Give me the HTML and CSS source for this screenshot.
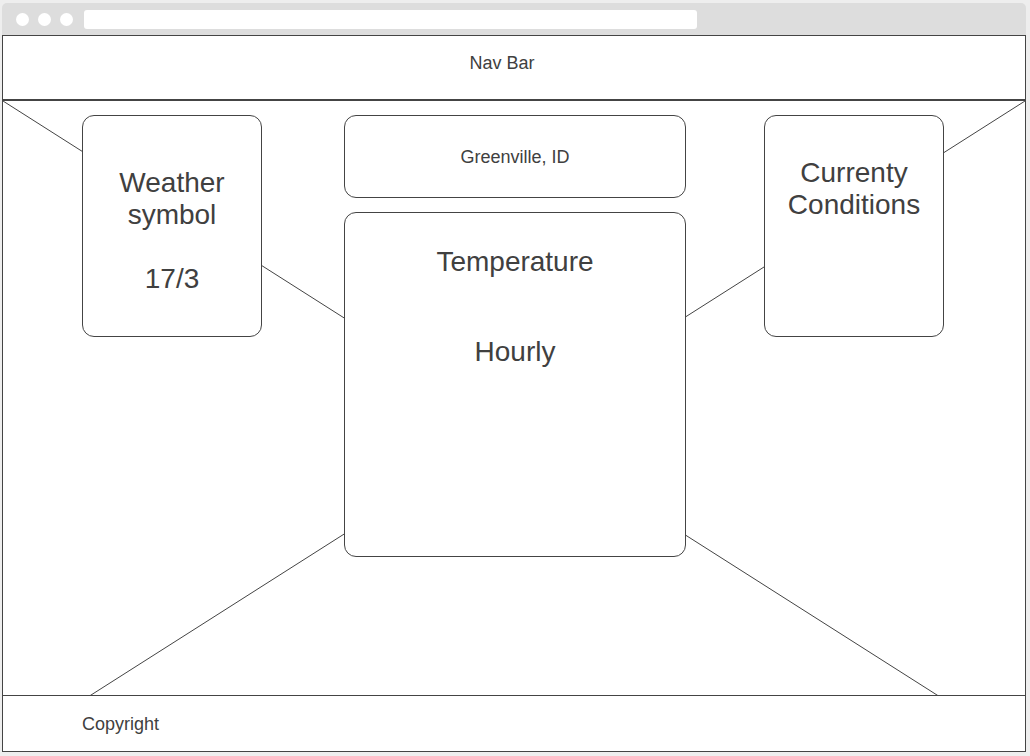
FILE: index.html
```html
<!DOCTYPE html>
<html lang="en">
<head>
  <meta charset="UTF-8" />
  <meta name="viewport" content="width=device-width, initial-scale=1.0"/>
  <title>Weather | Wireframe</title>
  <link rel="stylesheet" href="styles.css">
</head>
<body>

  <div class="window">
    <div class="chrome">
      <span class="dot"></span>
      <span class="dot"></span>
      <span class="dot"></span>
      <div class="url"></div>
    </div>

    <div class="frame">
      <header class="navbar">Nav Bar</header>

      <div class="content">
        <!-- placeholder cross behind the cards -->
        <svg class="cross" viewBox="0 0 100 100" preserveAspectRatio="none">
          <line x1="0" y1="0" x2="100" y2="100" />
          <line x1="100" y1="0" x2="0" y2="100" />
        </svg>

        <main class="cards">
          <section class="card side weather">Weather<br>symbol<br><br>17/3</section>

          <div class="middle">
            <section class="card location">Greenville, ID</section>
            <section class="card temp">
              <p>Temperature</p>
              <p class="hourly">Hourly</p>
            </section>
          </div>

          <section class="card side current">Currenty<br>Conditions</section>
        </main>

        <footer>Copyright</footer>
      </div>
    </div>
  </div>

</body>
</html>
```

FILE: styles.css
```css
* {
  margin: 0;
  padding: 0;
  box-sizing: border-box;
  font-family: 'Liberation Sans', Arial, sans-serif;
}

body {
  background-color: #eeeeee;
  color: #404040;
}

.window {
  width: 1024px;
  margin: 3px 0 0 2px;
}

.chrome {
  height: 32px;
  background-color: #dddddd;
  border-radius: 5px 5px 0 0;
  display: flex;
  align-items: center;
  padding-left: 14px;
}

.dot {
  width: 13px;
  height: 13px;
  border-radius: 50%;
  background-color: #fff;
  margin-right: 9px;
}

.url {
  width: 613px;
  height: 19px;
  margin-left: 2px;
  background-color: #fff;
  border-radius: 3px;
}

.frame {
  border: 1px solid #444;
  background-color: #fff;
}

.navbar {
  height: 65px;
  border-bottom: 2px solid #444;
  padding: 17px 24px 0 0;
  text-align: center;
  font-size: 18px;
}

.content {
  position: relative;
}

.cross {
  position: absolute;
  top: 0;
  left: 0;
  width: 100%;
  height: 100%;
}

.cross line {
  stroke: #444;
  stroke-width: 1;
  vector-effect: non-scaling-stroke;
}

.cards {
  position: relative;
  height: 594px;
  padding: 14px 0 0 79px;
  display: flex;
  align-items: flex-start;
}

.card {
  background-color: #fff;
  border: 1px solid #444;
  border-radius: 12px;
  text-align: center;
  font-size: 28px;
}

.side {
  width: 180px;
  height: 222px;
}

.weather {
  padding-top: 51px;
}

.current {
  padding-top: 41px;
}

.middle {
  width: 342px;
  margin: 0 78px 0 82px;
  display: flex;
  flex-direction: column;
  gap: 14px;
}

.location {
  height: 83px;
  padding-top: 2px;
  display: flex;
  align-items: center;
  justify-content: center;
  font-size: 18px;
}

.temp {
  height: 345px;
  padding-top: 33px;
}

.temp .hourly {
  margin-top: 58px;
}

footer {
  position: relative;
  height: 56px;
  background-color: #fff;
  border-top: 1px solid #444;
  padding: 18px 0 0 79px;
  font-size: 18px;
}
```
